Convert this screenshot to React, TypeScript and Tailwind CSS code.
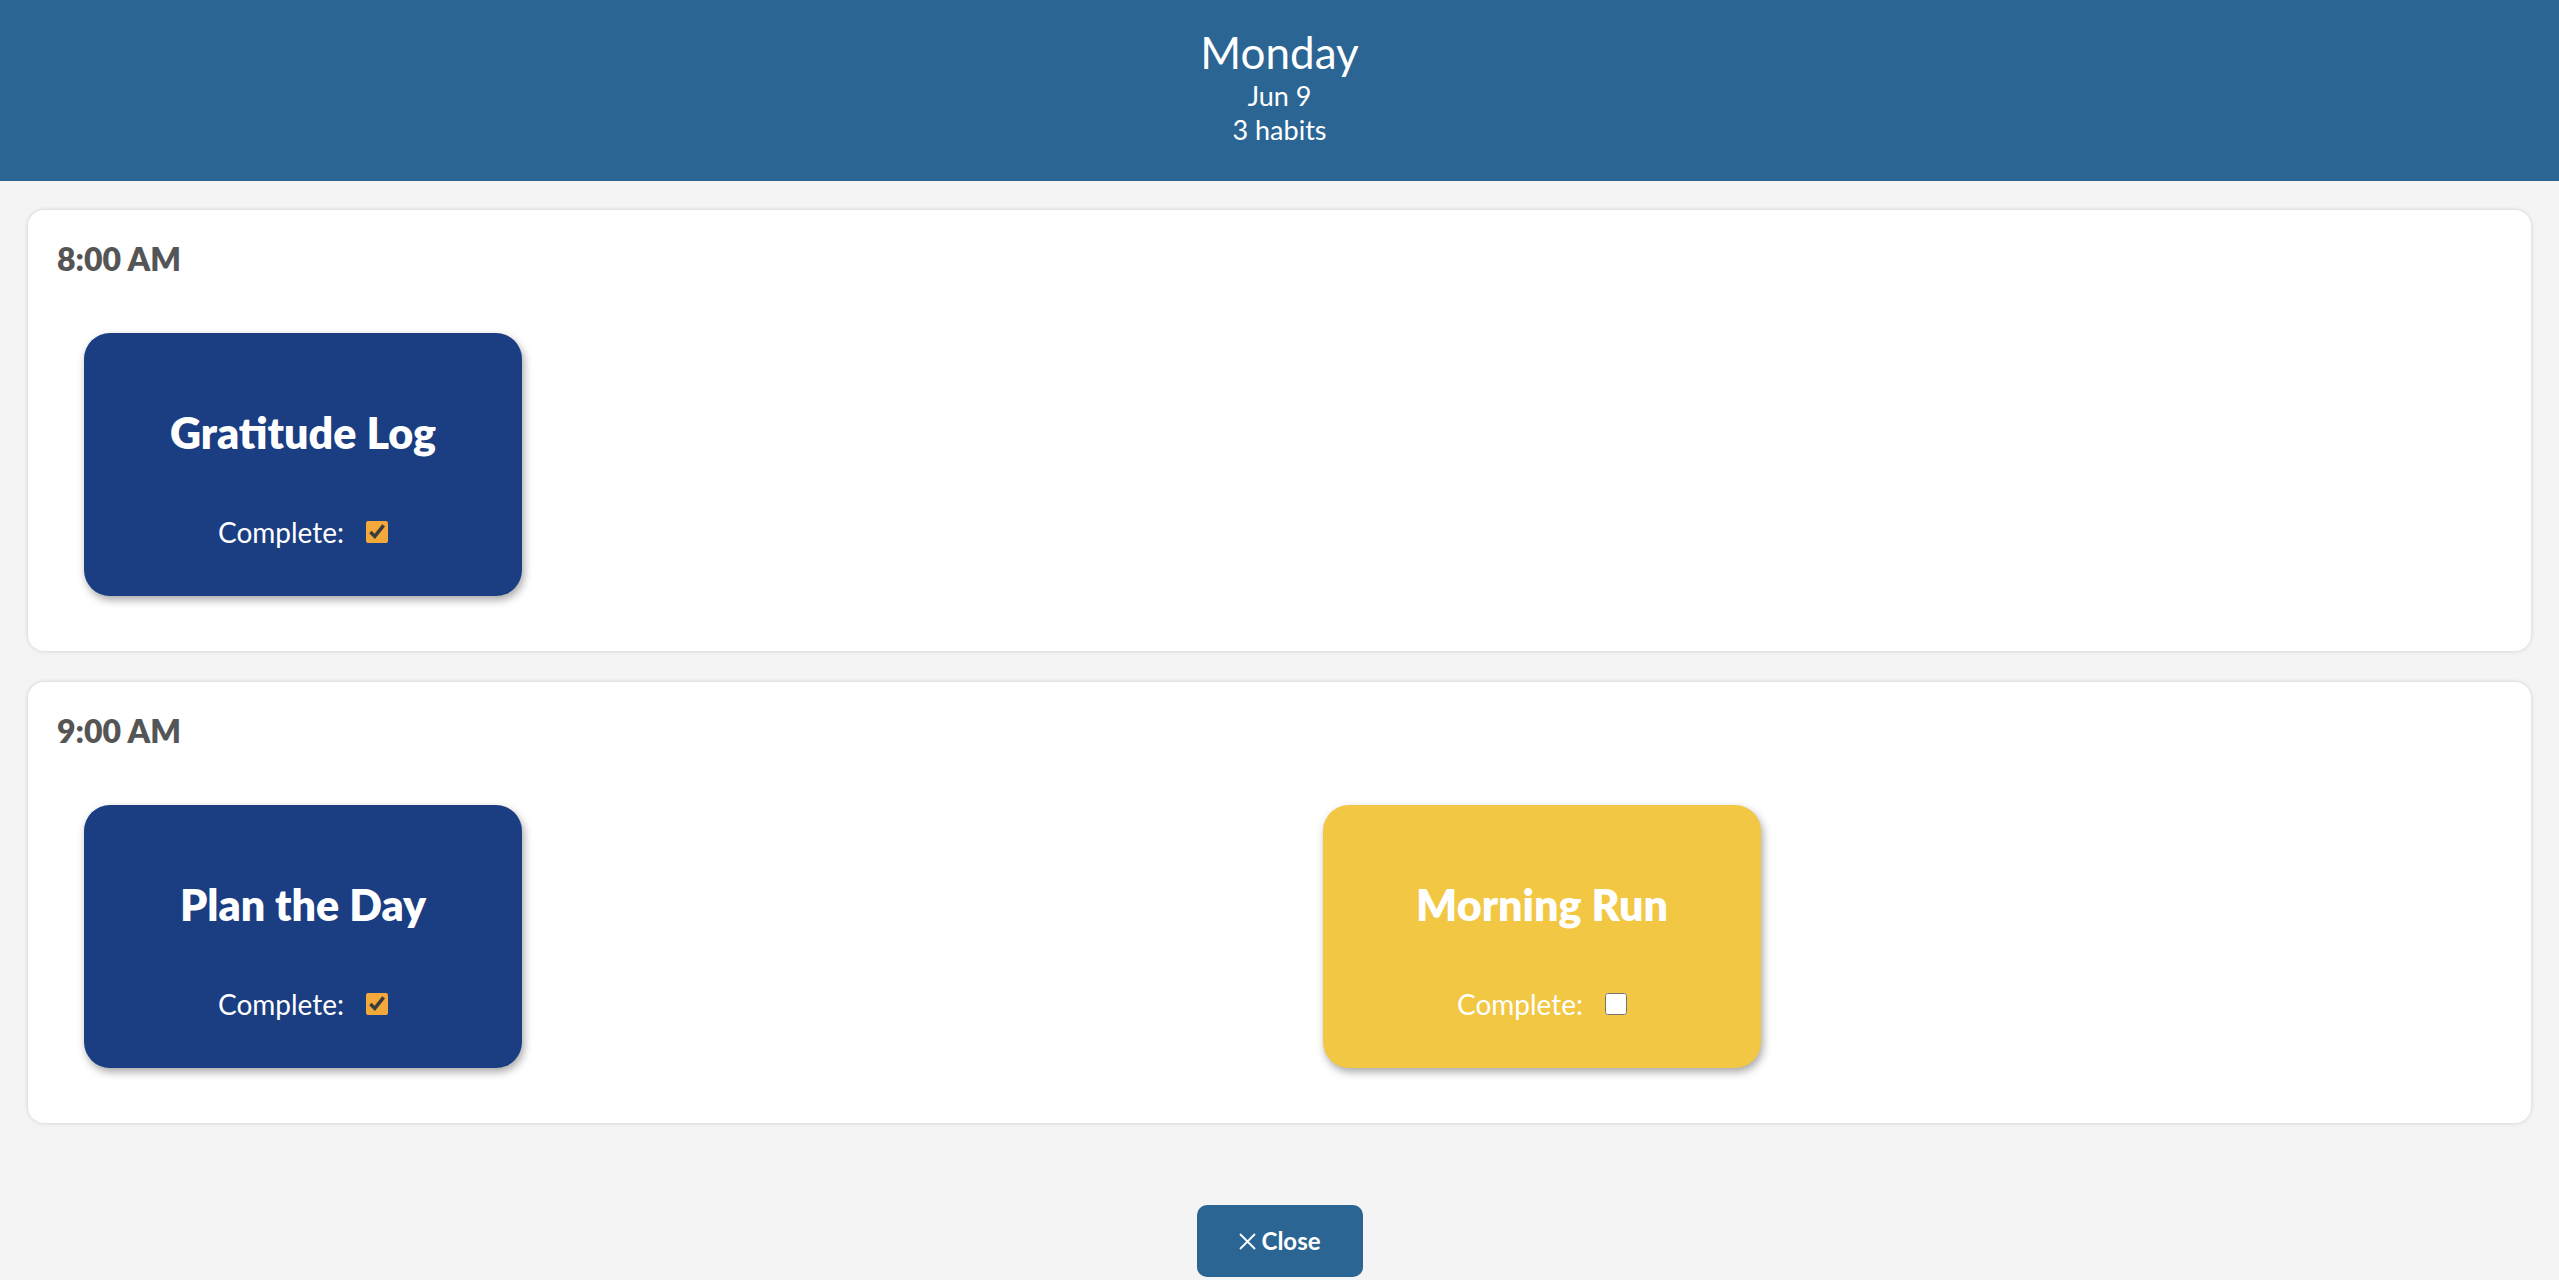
type Habit = {
  name: string;
  done: boolean;
  color: 'navy' | 'yellow';
};

type Slot = {
  time: string;
  habits: Habit[];
};

const slots: Slot[] = [
  {
    time: '8:00 AM',
    habits: [{ name: 'Gratitude Log', done: true, color: 'navy' }],
  },
  {
    time: '9:00 AM',
    habits: [
      { name: 'Plan the Day', done: true, color: 'navy' },
      { name: 'Morning Run', done: false, color: 'yellow' },
    ],
  },
];

const HabitCard = ({ habit }: { habit: Habit }) => {
  return (
    <div
      className={
        'flex h-[263px] w-[438px] flex-col items-center rounded-[26px] pt-[75px] text-white shadow-[2px_4px_8px_rgba(0,0,0,0.35)] ' +
        (habit.color === 'navy' ? 'bg-[#1b3d82]' : 'bg-[#f2c744]')
      }
    >
      <h3 className="text-[43px] leading-[50px] font-extrabold">{habit.name}</h3>
      <label className="mt-[57px] flex items-center gap-[22px] text-[28px] leading-[34px]">
        Complete:
        <input
          type="checkbox"
          defaultChecked={habit.done}
          className="h-[22px] w-[22px] accent-[#f2a93b]"
        />
      </label>
    </div>
  );
};

const App = () => {
  return (
    <div className="min-h-screen bg-[#f4f4f4] font-['Lato','Liberation_Sans',sans-serif]">
      <header className="flex h-[181px] flex-col items-center bg-[#2b6594] pt-[26px] text-white">
        <h1 className="text-[44px] leading-[53px]">Monday</h1>
        <p className="text-[27px] leading-[34px]">Jun 9</p>
        <p className="text-[27px] leading-[34px]">3 habits</p>
      </header>
      <main className="flex flex-col gap-[31px] px-[28px] pt-[29px]">
        {slots.map((slot) => (
          <section
            key={slot.time}
            className="rounded-[16px] bg-white pt-[30px] pr-[29px] pb-[55px] pl-[29px] shadow-[0_0_4px_rgba(0,0,0,0.16)]"
          >
            <h2 className="text-[32px] leading-[37px] font-extrabold text-[#555555]">
              {slot.time}
            </h2>
            <div className="mt-[56px] flex gap-[801px] pl-[27px]">
              {slot.habits.map((habit) => (
                <HabitCard key={habit.name} habit={habit} />
              ))}
            </div>
          </section>
        ))}
      </main>
      <div className="flex justify-center pt-[82px]">
        <button className="flex h-[72px] w-[166px] items-center justify-center gap-[6px] rounded-[10px] bg-[#2b6594] text-[24px] font-bold text-white">
          <svg width="17" height="17" viewBox="0 0 17 17" fill="none">
            <path d="M1 1 16 16M16 1 1 16" stroke="white" strokeWidth="1.8" />
          </svg>
          Close
        </button>
      </div>
    </div>
  );
};

export default App;
